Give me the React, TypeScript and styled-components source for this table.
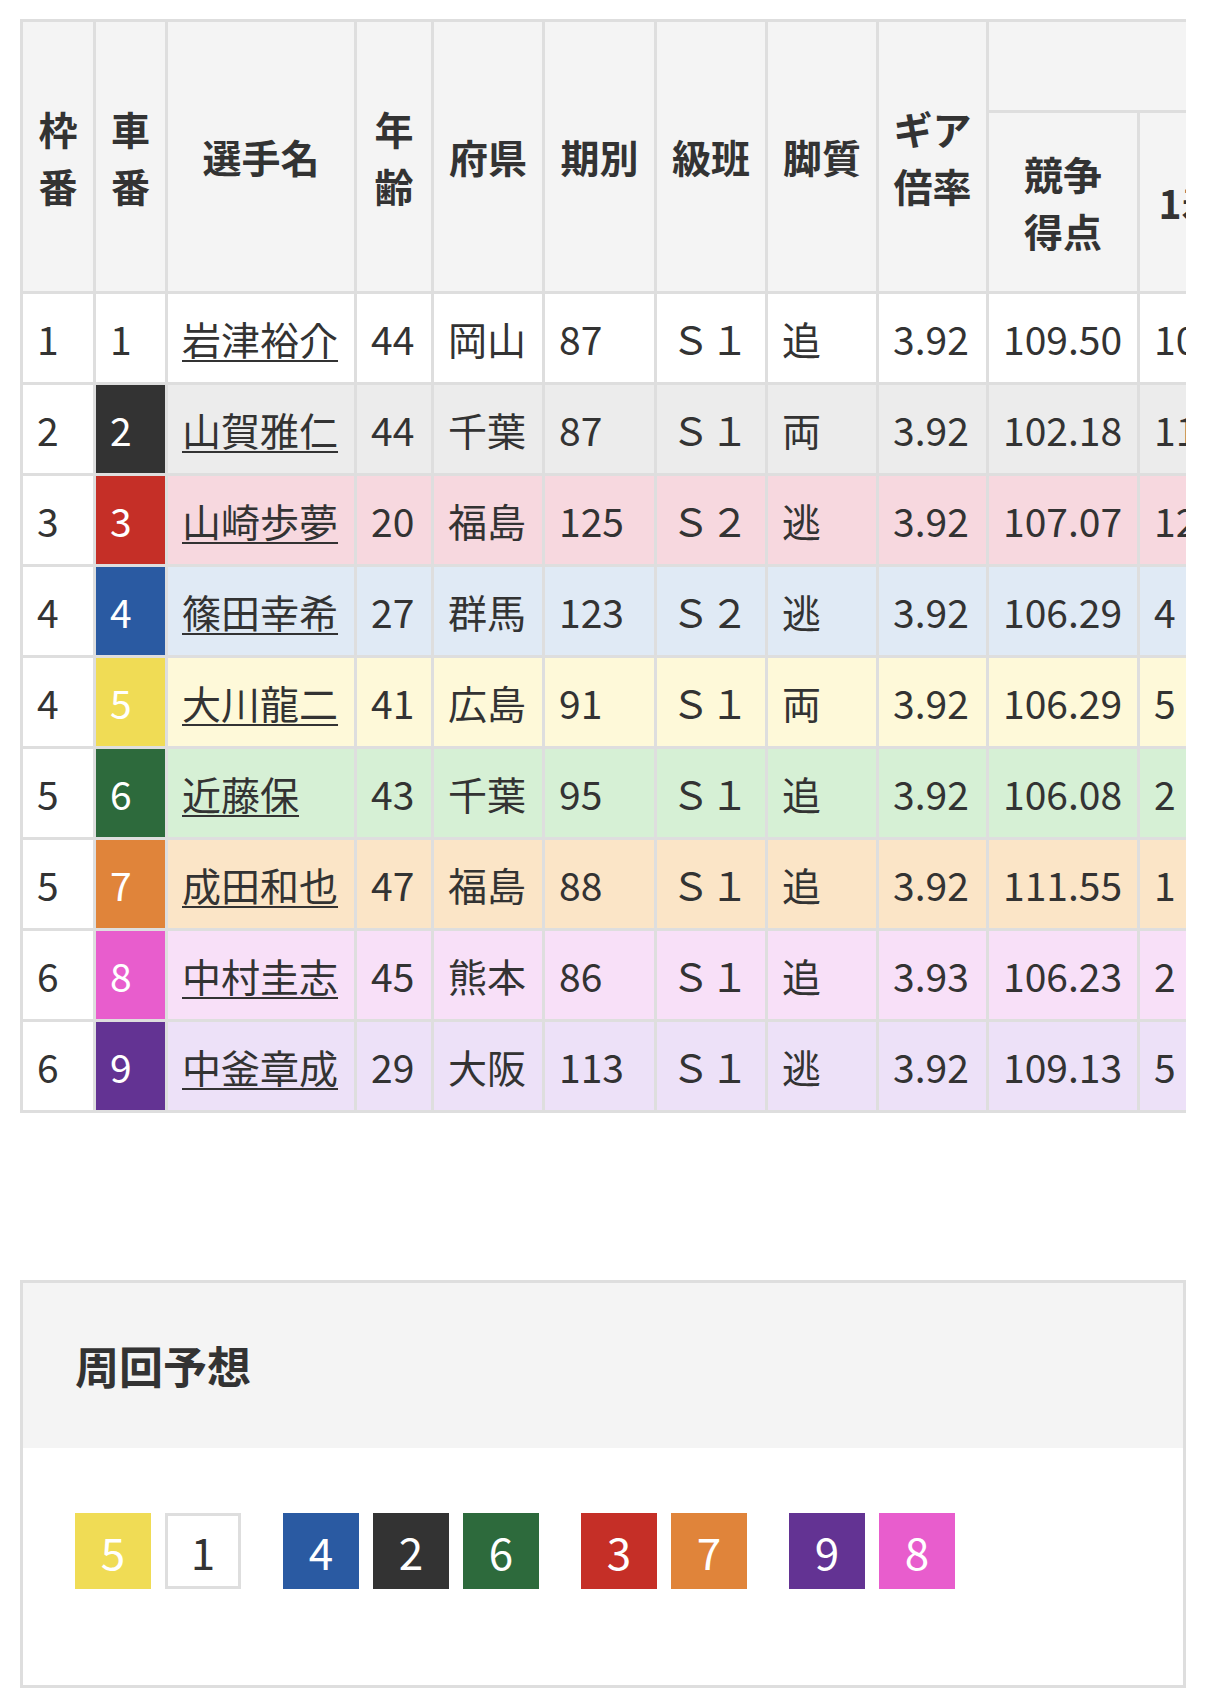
import styled, { createGlobalStyle } from 'styled-components'

const GlobalStyle = createGlobalStyle`
  body {
    margin: 0;
    background: #fff;
    color: #333;
    font-family: 'Noto Sans CJK JP', 'Noto Sans', sans-serif;
  }
`

const Page = styled.div`
  padding: 19px 20px 0 20px;
`

const TableScroll = styled.div`
  width: 1166px;
  overflow: hidden;
`

const Table = styled.table`
  border-collapse: collapse;
  table-layout: fixed;
  width: 1549px;
  font-size: 39px;
  line-height: 57px;
`

const Th = styled.th`
  background: #f4f4f4;
  border: 3px solid #dedede;
  font-weight: 700;
  text-align: center;
  vertical-align: middle;
  padding: 0 6px;
  white-space: nowrap;
`

const Td = styled.td<{ $bg?: string; $fg?: string }>`
  background: ${(p) => p.$bg || '#fff'};
  color: ${(p) => p.$fg || '#333'};
  border: 3px solid #dedede;
  padding: 0 15px 0 14px;
  white-space: nowrap;
  vertical-align: middle;
`

const NameLink = styled.a`
  color: #333;
  text-decoration: underline;
  text-decoration-thickness: 2px;
  text-underline-offset: 5px;
`

const HeadRow = styled.tr<{ $h: number }>`
  height: ${(p) => p.$h}px;
`

const BodyRow = styled.tr`
  height: 91px;
`

const Section = styled.section`
  margin-top: 167px;
  width: 1166px;
  box-sizing: border-box;
  border: 3px solid #dedede;
`

const SectionHead = styled.div`
  background: #f4f4f4;
  padding: 49px 52px 50px;
  font-size: 44px;
  line-height: 66px;
  font-weight: 700;
  color: #333;
`

const SectionBody = styled.div`
  display: flex;
  gap: 42px;
  padding: 65px 52px 96px;
`

const Group = styled.div`
  display: flex;
  gap: 14px;
`

const Car = styled.div<{ $bg: string; $fg: string; $outlined?: boolean }>`
  width: 76px;
  height: 76px;
  box-sizing: border-box;
  display: flex;
  align-items: center;
  justify-content: center;
  background: ${(p) => p.$bg};
  color: ${(p) => p.$fg};
  border: ${(p) => (p.$outlined ? '3px solid #dedede' : 'none')};
  font-size: 44px;
`

const carColors: Record<number, { strong: string; text: string; light: string }> = {
  1: { strong: '#ffffff', text: '#333', light: '#ffffff' },
  2: { strong: '#333333', text: '#fff', light: '#ececec' },
  3: { strong: '#c52f27', text: '#fff', light: '#f7d8df' },
  4: { strong: '#2a5aa2', text: '#fff', light: '#e0eaf5' },
  5: { strong: '#f0dc55', text: '#fff', light: '#fef9d9' },
  6: { strong: '#2d6a3c', text: '#fff', light: '#d6f0d5' },
  7: { strong: '#e0843a', text: '#fff', light: '#fbe5c7' },
  8: { strong: '#e85dcd', text: '#fff', light: '#f8e0f8' },
  9: { strong: '#633393', text: '#fff', light: '#ede1f8' },
}

const racers = [
  { waku: 1, car: 1, name: '岩津裕介', age: 44, pref: '岡山', term: 87, cls: 'Ｓ１', style: '追', gear: '3.92', score: '109.50', r: ['10', '8', '6', '20'] },
  { waku: 2, car: 2, name: '山賀雅仁', age: 44, pref: '千葉', term: 87, cls: 'Ｓ１', style: '両', gear: '3.92', score: '102.18', r: ['11', '6', '9', '31'] },
  { waku: 3, car: 3, name: '山崎歩夢', age: 20, pref: '福島', term: 125, cls: 'Ｓ２', style: '逃', gear: '3.92', score: '107.07', r: ['12', '4', '3', '9'] },
  { waku: 4, car: 4, name: '篠田幸希', age: 27, pref: '群馬', term: 123, cls: 'Ｓ２', style: '逃', gear: '3.92', score: '106.29', r: ['4', '7', '5', '18'] },
  { waku: 4, car: 5, name: '大川龍二', age: 41, pref: '広島', term: 91, cls: 'Ｓ１', style: '両', gear: '3.92', score: '106.29', r: ['5', '6', '4', '22'] },
  { waku: 5, car: 6, name: '近藤保', age: 43, pref: '千葉', term: 95, cls: 'Ｓ１', style: '追', gear: '3.92', score: '106.08', r: ['2', '5', '8', '19'] },
  { waku: 5, car: 7, name: '成田和也', age: 47, pref: '福島', term: 88, cls: 'Ｓ１', style: '追', gear: '3.92', score: '111.55', r: ['1', '9', '7', '15'] },
  { waku: 6, car: 8, name: '中村圭志', age: 45, pref: '熊本', term: 86, cls: 'Ｓ１', style: '追', gear: '3.93', score: '106.23', r: ['2', '4', '6', '24'] },
  { waku: 6, car: 9, name: '中釜章成', age: 29, pref: '大阪', term: 113, cls: 'Ｓ１', style: '逃', gear: '3.92', score: '109.13', r: ['5', '3', '4', '16'] },
]

const colWidths = [73, 72, 189, 77, 111, 112, 111, 111, 110, 151, 102, 110, 110, 110]

const lineGroups = [[5, 1], [4, 2, 6], [3, 7], [9, 8]]

export default function App() {
  return (
    <>
      <GlobalStyle />
      <Page>
        <TableScroll>
          <Table>
            <colgroup>
              {colWidths.map((w, i) => (
                <col key={i} style={{ width: w }} />
              ))}
            </colgroup>
            <thead>
              <HeadRow $h={91}>
                <Th rowSpan={2}>枠<br />番</Th>
                <Th rowSpan={2}>車<br />番</Th>
                <Th rowSpan={2}>選手名</Th>
                <Th rowSpan={2}>年<br />齢</Th>
                <Th rowSpan={2}>府県</Th>
                <Th rowSpan={2}>期別</Th>
                <Th rowSpan={2}>級班</Th>
                <Th rowSpan={2}>脚質</Th>
                <Th rowSpan={2}>ギア<br />倍率</Th>
                <Th colSpan={5}>直近成績</Th>
              </HeadRow>
              <HeadRow $h={181}>
                <Th>競争<br />得点</Th>
                <Th>1着</Th>
                <Th>2着</Th>
                <Th>3着</Th>
                <Th>着外</Th>
              </HeadRow>
            </thead>
            <tbody>
              {racers.map((r) => {
                const c = carColors[r.car]
                return (
                  <BodyRow key={r.car}>
                    <Td>{r.waku}</Td>
                    <Td $bg={c.strong} $fg={c.text}>{r.car}</Td>
                    <Td $bg={c.light}>
                      <NameLink href="#">{r.name}</NameLink>
                    </Td>
                    <Td $bg={c.light}>{r.age}</Td>
                    <Td $bg={c.light}>{r.pref}</Td>
                    <Td $bg={c.light}>{r.term}</Td>
                    <Td $bg={c.light}>{r.cls}</Td>
                    <Td $bg={c.light}>{r.style}</Td>
                    <Td $bg={c.light}>{r.gear}</Td>
                    <Td $bg={c.light}>{r.score}</Td>
                    {r.r.map((v, i) => (
                      <Td key={i} $bg={c.light}>{v}</Td>
                    ))}
                  </BodyRow>
                )
              })}
            </tbody>
          </Table>
        </TableScroll>

        <Section>
          <SectionHead>周回予想</SectionHead>
          <SectionBody>
            {lineGroups.map((g, gi) => (
              <Group key={gi}>
                {g.map((n) => {
                  const c = carColors[n]
                  return (
                    <Car key={n} $bg={c.strong} $fg={c.text} $outlined={n === 1}>
                      {n}
                    </Car>
                  )
                })}
              </Group>
            ))}
          </SectionBody>
        </Section>
      </Page>
    </>
  )
}
